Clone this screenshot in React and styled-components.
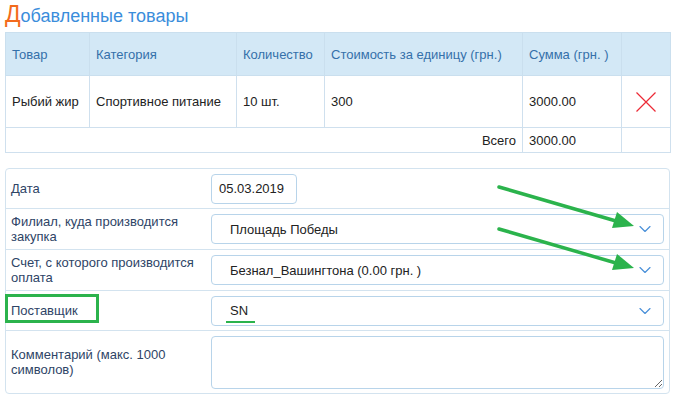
import React from 'react';
import styled, { createGlobalStyle } from 'styled-components';
import { ChevronDown } from 'lucide-react';

const GlobalStyle = createGlobalStyle`
  body {
    margin: 0;
    background: #fff;
    font-family: "Liberation Sans", Arial, sans-serif;
  }
`;

const items = [
  { name: 'Рыбий жир', category: 'Спортивное питание', qty: '10 шт.', price: '300', sum: '3000.00' },
];

const App = () => (
  <>
    <GlobalStyle />
    <StyledPage>
      <StyledTitle>
        <span>Д</span>обавленные товары
      </StyledTitle>

      <StyledTable>
        <colgroup>
          <col style={{ width: 84 }} />
          <col style={{ width: 147 }} />
          <col style={{ width: 88 }} />
          <col style={{ width: 198 }} />
          <col style={{ width: 99 }} />
          <col style={{ width: 49 }} />
        </colgroup>
        <thead>
          <tr>
            <StyledTh>Товар</StyledTh>
            <StyledTh>Категория</StyledTh>
            <StyledTh>Количество</StyledTh>
            <StyledTh>Стоимость за единицу (грн.)</StyledTh>
            <StyledTh>Сумма (грн. )</StyledTh>
            <StyledTh />
          </tr>
        </thead>
        <tbody>
          {items.map((item) => (
            <tr key={item.name}>
              <StyledTd>{item.name}</StyledTd>
              <StyledTd>{item.category}</StyledTd>
              <StyledTd>{item.qty}</StyledTd>
              <StyledTd>{item.price}</StyledTd>
              <StyledTd>{item.sum}</StyledTd>
              <StyledTd $center>
                <StyledRemove viewBox="0 0 22 22">
                  <path d="M1.5 1.5 L20.5 20.5 M20.5 1.5 L1.5 20.5" />
                </StyledRemove>
              </StyledTd>
            </tr>
          ))}
          <tr>
            <StyledTd $total $right colSpan={4}>Всего</StyledTd>
            <StyledTd $total>3000.00</StyledTd>
            <StyledTd $total />
          </tr>
        </tbody>
      </StyledTable>

      <StyledForm>
        <StyledRow $height={40}>
          <StyledLabel>Дата</StyledLabel>
          <StyledDateInput>05.03.2019</StyledDateInput>
        </StyledRow>
        <StyledRow $height={41}>
          <StyledLabel>Филиал, куда производится закупка</StyledLabel>
          <StyledSelect>
            <span>Площадь Победы</span>
            <ChevronDown size={20} strokeWidth={1.4} color="#4a90d9" />
          </StyledSelect>
        </StyledRow>
        <StyledRow $height={41}>
          <StyledLabel>Счет, с которого производится оплата</StyledLabel>
          <StyledSelect>
            <span>Безнал_Вашингтона (0.00 грн. )</span>
            <ChevronDown size={20} strokeWidth={1.4} color="#4a90d9" />
          </StyledSelect>
        </StyledRow>
        <StyledRow $height={40}>
          <StyledLabel>
            Поставщик
            <StyledMarkBox />
          </StyledLabel>
          <StyledSelect>
            <StyledUnderlined>SN</StyledUnderlined>
            <ChevronDown size={20} strokeWidth={1.4} color="#4a90d9" />
          </StyledSelect>
        </StyledRow>
        <StyledRow $height={62} $last>
          <StyledLabel>Комментарий (макс. 1000 символов)</StyledLabel>
          <StyledTextarea />
        </StyledRow>
      </StyledForm>

      <StyledArrows viewBox="0 0 680 398">
        <line x1="499" y1="187" x2="616" y2="221" />
        <polygon points="634,226 612,228 617,212" />
        <line x1="499" y1="229" x2="616" y2="263" />
        <polygon points="634,268 612,270 617,254" />
      </StyledArrows>
    </StyledPage>
  </>
);

const StyledPage = styled.div`
  position: relative;
  width: 680px;
  height: 398px;
  padding: 0 10px 0 5px;
  box-sizing: border-box;
  overflow: hidden;
`;

const StyledTitle = styled.h2`
  margin: 0 0 4px;
  height: 28px;
  font-size: 18px;
  line-height: 28px;
  font-weight: normal;
  color: #3a8ddb;

  span {
    font-size: 23px;
    color: #f36a1c;
  }
`;

const StyledTable = styled.table`
  width: 665px;
  border-collapse: collapse;
  table-layout: fixed;
  font-size: 13px;
`;

const StyledTh = styled.th`
  height: 42px;
  padding: 0 6px;
  text-align: left;
  font-weight: normal;
  color: #3570aa;
  background: #d3e8f6;
  border: 1px solid #cadfee;
  white-space: nowrap;
`;

const StyledTd = styled.td`
  height: ${({ $total }) => ($total ? '24px' : '51px')};
  padding: 0 6px;
  color: #222;
  border: 1px solid #cfe0ee;
  text-align: ${({ $right, $center }) => ($right ? 'right' : $center ? 'center' : 'left')};
  vertical-align: middle;
  white-space: nowrap;
`;

const StyledRemove = styled.svg`
  display: block;
  width: 22px;
  height: 22px;
  margin: 0 auto;
  stroke: #ec2a36;
  stroke-width: 1.2;
  fill: none;
`;

const StyledForm = styled.div`
  margin-top: 15px;
  width: 665px;
  box-sizing: border-box;
  border: 1px solid #d3e3ef;
  border-radius: 4px;
`;

const StyledRow = styled.div`
  display: grid;
  grid-template-columns: 205px 1fr;
  align-items: center;
  height: ${({ $height }) => $height}px;
  padding-right: 5px;
  box-sizing: border-box;
  border-bottom: ${({ $last }) => ($last ? 'none' : '1px solid #d3e3ef')};
`;

const StyledLabel = styled.div`
  position: relative;
  padding: 0 8px 0 5px;
  font-size: 13px;
  line-height: 15px;
  color: #2e4466;
`;

const StyledMarkBox = styled.div`
  position: absolute;
  left: -1px;
  top: -9px;
  width: 94px;
  height: 29px;
  box-sizing: border-box;
  border: 3px solid #2bb34c;
`;

const StyledField = styled.div`
  box-sizing: border-box;
  height: 30px;
  border: 1px solid #b8d4ea;
  border-radius: 4px;
  background: #fff;
  font-size: 13px;
  color: #222;
`;

const StyledDateInput = styled(StyledField)`
  width: 86px;
  display: flex;
  align-items: center;
  padding-left: 7px;
`;

const StyledSelect = styled(StyledField)`
  display: flex;
  align-items: center;
  justify-content: space-between;
  padding: 0 8px 0 18px;
`;

const StyledUnderlined = styled.span`
  position: relative;

  &::after {
    content: '';
    position: absolute;
    left: -4px;
    right: -7px;
    bottom: -5px;
    height: 2px;
    background: #2bb34c;
  }
`;

const StyledTextarea = styled.textarea`
  display: block;
  box-sizing: border-box;
  width: 100%;
  height: 53px;
  border: 1px solid #b8d4ea;
  border-radius: 4px;
  resize: vertical;
  font-family: inherit;
  font-size: 13px;
`;

const StyledArrows = styled.svg`
  position: absolute;
  left: 0;
  top: 0;
  width: 680px;
  height: 398px;
  pointer-events: none;

  line {
    stroke: #2bb34c;
    stroke-width: 3.5;
    stroke-linecap: round;
  }

  polygon {
    fill: #2bb34c;
  }
`;

export default App;
